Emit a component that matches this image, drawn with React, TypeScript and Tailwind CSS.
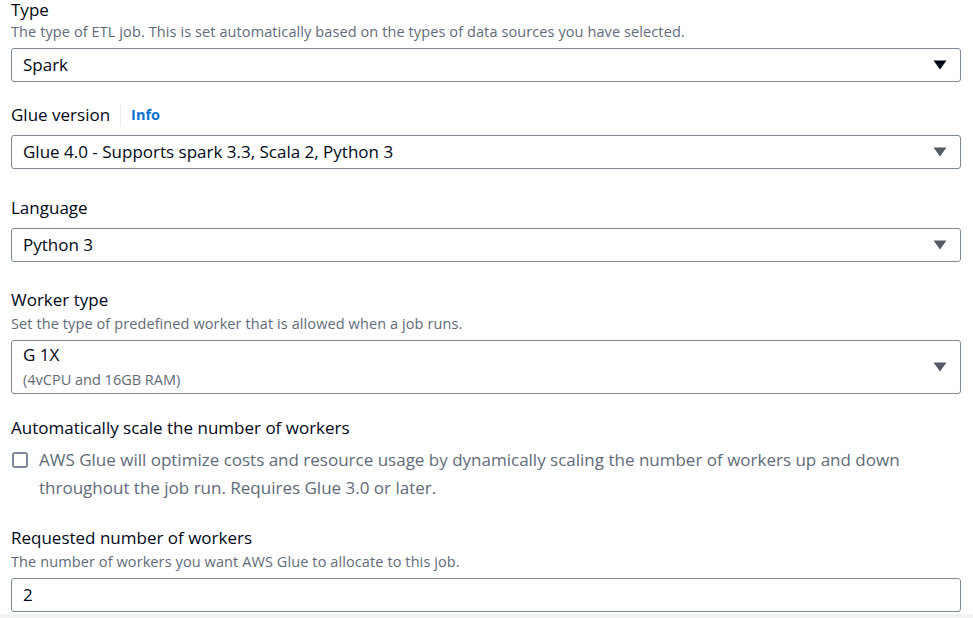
import React from 'react'

const font = { fontFamily: '"Open Sans", "Noto Sans", sans-serif' }

function Arrow({ dark }: { dark?: boolean }) {
  return (
    <svg width="14" height="10" viewBox="0 0 14 10" className="shrink-0">
      <path d="M0.5 0.5 H13.5 L7 9.5 Z" fill={dark ? '#000716' : '#545b64'} />
    </svg>
  )
}

function Select({ value, sub, dark }: { value: string; sub?: string; dark?: boolean }) {
  return (
    <div className="flex w-[950px] items-center justify-between rounded-[3px] border border-[#7d8998] bg-white pl-[11px] pr-[13px]">
      {sub ? (
        <div className="flex flex-col pt-[4px] pb-[3px]">
          <span className="text-[17px] leading-[20px] text-[#000716]">{value}</span>
          <span className="mt-[5px] text-[14.5px] leading-[20px] text-[#5f6b7a]">{sub}</span>
        </div>
      ) : (
        <span className="text-[17px] leading-[32px] text-[#000716]">{value}</span>
      )}
      <Arrow dark={dark} />
    </div>
  )
}

function Label({ children, className }: { children: React.ReactNode; className?: string }) {
  return <div className={`text-[17px] leading-[20px] text-[#000716] ${className ?? ''}`}>{children}</div>
}

function Desc({ children, className }: { children: React.ReactNode; className?: string }) {
  return (
    <div className={`text-[14.5px] leading-[20px] tracking-[0.1px] text-[#5f6b7a] ${className ?? 'mt-[4px]'}`}>
      {children}
    </div>
  )
}

export default function App() {
  return (
    <div style={font} className="w-[973px] bg-white">
      <div className="h-[614px] overflow-hidden px-[11px]">
        <Label>Type</Label>
        <Desc className="mt-[2px]">
          The type of ETL job. This is set automatically based on the types of data sources you have selected.
        </Desc>
        <div className="mt-[6px]">
          <Select value="Spark" dark />
        </div>

        <div className="mt-[23px] flex h-[20px] items-center">
          <span className="text-[17px] leading-[20px] text-[#000716]">Glue version</span>
          <span className="mx-[10px] h-[22px] w-px bg-[#e9ebed]" />
          <span className="text-[14.5px] font-bold leading-[20px] text-[#0972d3]">Info</span>
        </div>
        <div className="mt-[10px]">
          <Select value="Glue 4.0 - Supports spark 3.3, Scala 2, Python 3" />
        </div>

        <Label className="mt-[29px]">Language</Label>
        <div className="mt-[10px]">
          <Select value="Python 3" />
        </div>

        <Label className="mt-[28px]">Worker type</Label>
        <Desc>Set the type of predefined worker that is allowed when a job runs.</Desc>
        <div className="mt-[6px]">
          <Select value="G 1X" sub="(4vCPU and 16GB RAM)" />
        </div>

        <Label className="mt-[24px]">Automatically scale the number of workers</Label>
        <div className="mt-[8px] flex items-start">
          <span className="mt-[6px] ml-px h-[16px] w-[16px] shrink-0 rounded-[3px] border-2 border-[#7d8998] bg-white" />
          <p className="ml-[11px] text-[17px] leading-[28px] text-[#5f6b7a]">
            AWS Glue will optimize costs and resource usage by dynamically scaling the number of workers up and down
            <br />
            throughout the job run. Requires Glue 3.0 or later.
          </p>
        </div>

        <Label className="mt-[26px]">Requested number of workers</Label>
        <Desc>The number of workers you want AWS Glue to allocate to this job.</Desc>
        <div className="mt-[6px] w-[950px] rounded-[3px] border border-[#7d8998] bg-white pl-[11px] text-[17px] leading-[32px] text-[#000716]">
          2
        </div>
      </div>
      <div className="h-[10px] bg-[#f2f3f3]" />
    </div>
  )
}
